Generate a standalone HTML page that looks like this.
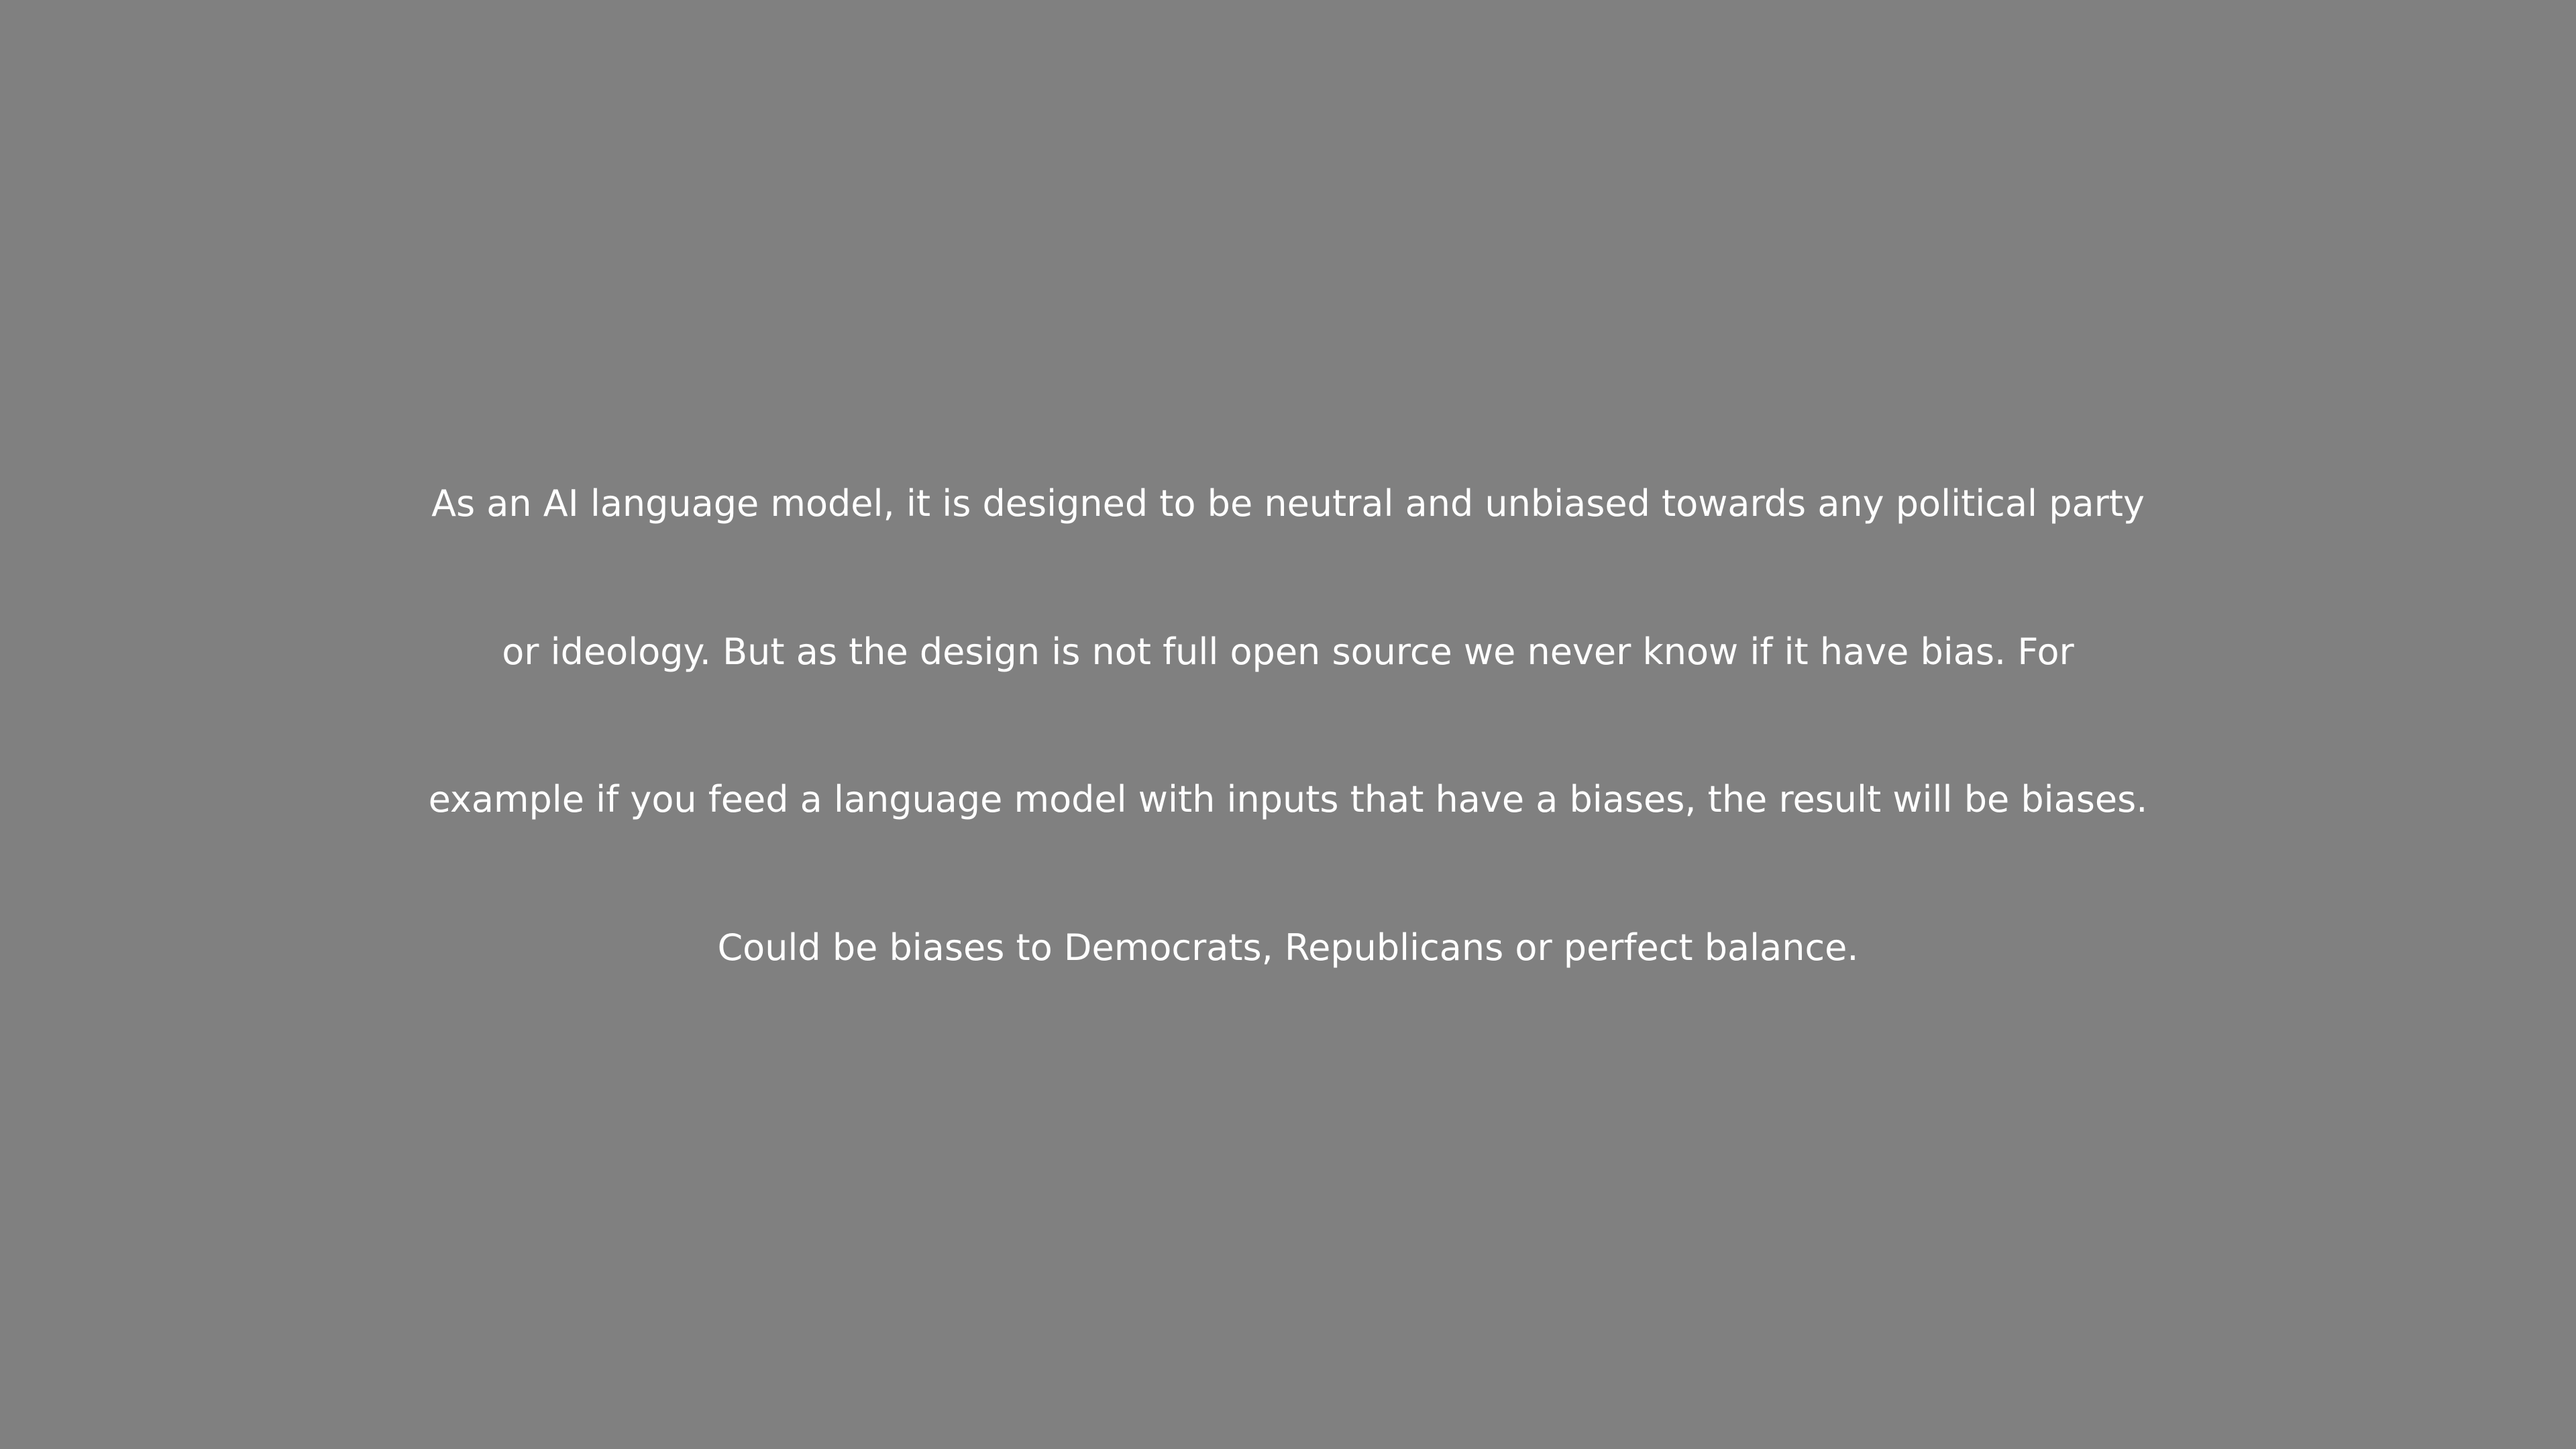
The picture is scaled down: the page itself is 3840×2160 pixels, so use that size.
<!DOCTYPE html>
<html><head><meta charset="utf-8"><style>
html,body{margin:0;padding:0;}
body{width:3840px;height:2160px;background:#808080;overflow:hidden;position:relative;}
.t{position:absolute;left:0;top:641px;width:3840px;text-align:center;color:#fff;
font-family:"DejaVu Sans",sans-serif;
font-size:54px;line-height:220.7px;white-space:nowrap;}
</style></head><body>
<div class="t">As an AI language model, it is designed to be neutral and unbiased towards any political party<br>or ideology. But as the design is not full open source we never know if it have bias. For<br>example if you feed a language model with inputs that have a biases, the result will be biases.<br>Could be biases to Democrats, Republicans or perfect balance.</div>
</body></html>
